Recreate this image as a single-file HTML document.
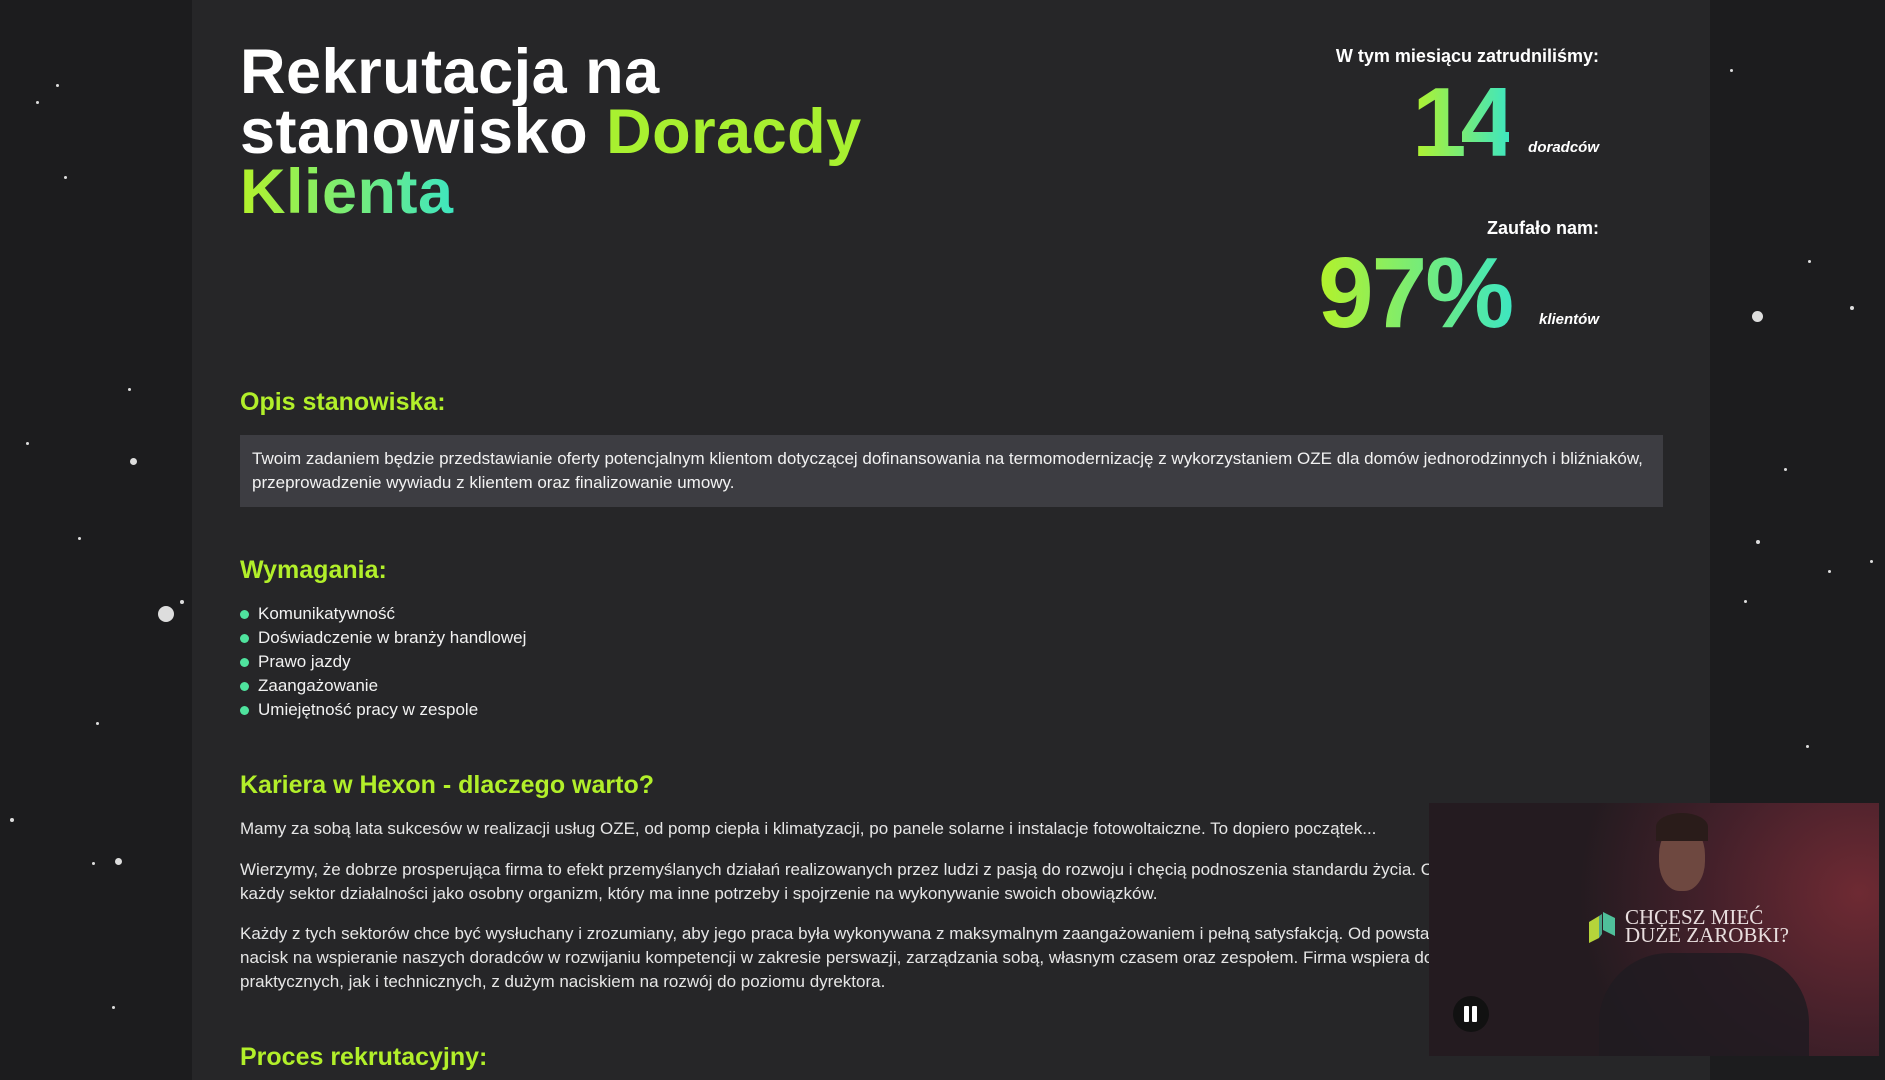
<!DOCTYPE html>
<html><head><meta charset="utf-8"><style>
*{margin:0;padding:0;box-sizing:border-box}
html,body{width:1885px;height:1080px;overflow:hidden;background:#1c1c1e;font-family:"Liberation Sans",sans-serif;color:#fff}
.panel{position:absolute;left:192px;top:0;width:1518px;height:1080px;background:#262628}
.abs{position:absolute;white-space:nowrap}
.grad{background:linear-gradient(90deg,#b4f22a,#3ee6c0);-webkit-background-clip:text;background-clip:text;color:transparent}
h1{position:absolute;left:240px;top:42px;font-size:63px;line-height:60px;font-weight:bold;letter-spacing:0.5px}
.h2{position:absolute;left:240px;font-size:25px;font-weight:bold;color:#b2ef2a}
.p{position:absolute;left:240px;font-size:17px;color:#e6e6e6;white-space:nowrap}
.star{position:absolute;background:#ddd;border-radius:50%}
</style></head><body>
<div class="panel"></div>
<h1>Rekrutacja na<br>stanowisko <span style="color:#a8f030">Doracdy</span><br><span class="grad">Klienta</span></h1>

<div class="abs" style="right:286px;top:46px;font-size:18px;font-weight:bold">W tym miesiącu zatrudniliśmy:</div>
<div class="abs grad" style="left:1412px;top:66px;font-size:98px;font-weight:bold;letter-spacing:-6px">14</div>
<div class="abs" style="right:286px;top:139px;font-size:15px;font-weight:bold;font-style:italic">doradców</div>
<div class="abs" style="right:286px;top:218px;font-size:18px;font-weight:bold">Zaufało nam:</div>
<div class="abs grad" style="left:1318px;top:236px;font-size:100px;font-weight:bold;letter-spacing:-2px">97%</div>
<div class="abs" style="right:286px;top:311px;font-size:15px;font-weight:bold;font-style:italic">klientów</div>

<div class="h2" style="top:388px">Opis stanowiska:</div>
<div style="position:absolute;left:240px;top:435px;width:1423px;height:72px;background:#3d3d42;padding:12px 0 0 12px;font-size:17px;line-height:24px;color:#f2f2f2;white-space:nowrap">Twoim zadaniem będzie przedstawianie oferty potencjalnym klientom dotyczącej dofinansowania na termomodernizację z wykorzystaniem OZE dla domów jednorodzinnych i bliźniaków,<br>przeprowadzenie wywiadu z klientem oraz finalizowanie umowy.</div>

<div class="h2" style="top:556px">Wymagania:</div>
<div style="position:absolute;left:240px;top:602px;font-size:17px;line-height:24px;color:#f2f2f2">
<div><span style="display:inline-block;width:9px;height:9px;border-radius:50%;background:#4fe39e;margin-right:9px"></span>Komunikatywność</div>
<div><span style="display:inline-block;width:9px;height:9px;border-radius:50%;background:#4fe39e;margin-right:9px"></span>Doświadczenie w branży handlowej</div>
<div><span style="display:inline-block;width:9px;height:9px;border-radius:50%;background:#4fe39e;margin-right:9px"></span>Prawo jazdy</div>
<div><span style="display:inline-block;width:9px;height:9px;border-radius:50%;background:#4fe39e;margin-right:9px"></span>Zaangażowanie</div>
<div><span style="display:inline-block;width:9px;height:9px;border-radius:50%;background:#4fe39e;margin-right:9px"></span>Umiejętność pracy w zespole</div>
</div>

<div class="h2" style="top:771px">Kariera w Hexon - dlaczego warto?</div>
<div class="p" style="top:819px">Mamy za sobą lata sukcesów w realizacji usług OZE, od pomp ciepła i klimatyzacji, po panele solarne i instalacje fotowoltaiczne. To dopiero początek...</div>
<div class="p" style="top:858px;line-height:24px">Wierzymy, że dobrze prosperująca firma to efekt przemyślanych działań realizowanych przez ludzi z pasją do rozwoju i chęcią podnoszenia standardu życia. Od samego<br>każdy sektor działalności jako osobny organizm, który ma inne potrzeby i spojrzenie na wykonywanie swoich obowiązków.</div>
<div class="p" style="top:922px;line-height:24px">Każdy z tych sektorów chce być wysłuchany i zrozumiany, aby jego praca była wykonywana z maksymalnym zaangażowaniem i pełną satysfakcją. Od powstania firmy<br>nacisk na wspieranie naszych doradców w rozwijaniu kompetencji w zakresie perswazji, zarządzania sobą, własnym czasem oraz zespołem. Firma wspiera doradców<br>praktycznych, jak i technicznych, z dużym naciskiem na rozwój do poziomu dyrektora.</div>
<div class="h2" style="top:1043px">Proces rekrutacyjny:</div>

<div style="position:absolute;left:1429px;top:803px;width:450px;height:253px;overflow:hidden;background:radial-gradient(ellipse 280px 260px at 430px 90px,#6e2a33,#43202a 55%,#241b20);">
<div style="position:absolute;left:170px;top:150px;width:210px;height:140px;background:#201b21;border-radius:70px 70px 0 0;opacity:.85"></div>
<div style="position:absolute;left:230px;top:22px;width:46px;height:66px;border-radius:45%;background:#6e4840"></div>
<div style="position:absolute;left:227px;top:10px;width:52px;height:28px;border-radius:50% 50% 0 0;background:#2a1c1a"></div>
<svg style="position:absolute;left:157px;top:107px" width="32" height="34" viewBox="0 0 32 34"><path d="M3 12 L13 6 L13 28 L3 33Z" fill="#b5d43a"/><path d="M13 6 L16 4 L16 24 L13 28Z" fill="#4aa58a"/><path d="M17 2 L29 8 L29 26 L17 20Z" fill="#4fbf9a"/></svg>
<div style="position:absolute;left:196px;top:105px;font-family:'Liberation Serif',serif;font-size:21px;line-height:18px;color:#e8dede">CHCESZ MIEĆ<br>DUŻE ZAROBKI?</div>
<div style="position:absolute;left:24px;top:193px;width:36px;height:36px;border-radius:50%;background:#111"><div style="position:absolute;left:11px;top:10px;width:5px;height:16px;background:#fff;border-radius:1px"></div><div style="position:absolute;left:19px;top:10px;width:5px;height:16px;background:#fff;border-radius:1px"></div></div>
</div>

<div class="star" style="left:158px;top:606px;width:16px;height:16px"></div>
<div class="star" style="left:130px;top:458px;width:7px;height:7px"></div>
<div class="star" style="left:115px;top:858px;width:7px;height:7px"></div>
<div class="star" style="left:1752px;top:311px;width:11px;height:11px"></div>
<div class="star" style="left:180px;top:600px;width:4px;height:4px"></div>
<div class="star" style="left:36px;top:101px;width:3px;height:3px"></div>
<div class="star" style="left:56px;top:84px;width:3px;height:3px"></div>
<div class="star" style="left:64px;top:176px;width:3px;height:3px"></div>
<div class="star" style="left:128px;top:388px;width:3px;height:3px"></div>
<div class="star" style="left:26px;top:442px;width:3px;height:3px"></div>
<div class="star" style="left:78px;top:537px;width:3px;height:3px"></div>
<div class="star" style="left:96px;top:722px;width:3px;height:3px"></div>
<div class="star" style="left:10px;top:818px;width:4px;height:4px"></div>
<div class="star" style="left:92px;top:862px;width:3px;height:3px"></div>
<div class="star" style="left:112px;top:1006px;width:3px;height:3px"></div>
<div class="star" style="left:1730px;top:69px;width:3px;height:3px"></div>
<div class="star" style="left:1808px;top:260px;width:3px;height:3px"></div>
<div class="star" style="left:1850px;top:306px;width:4px;height:4px"></div>
<div class="star" style="left:1756px;top:540px;width:4px;height:4px"></div>
<div class="star" style="left:1828px;top:570px;width:3px;height:3px"></div>
<div class="star" style="left:1784px;top:468px;width:3px;height:3px"></div>
<div class="star" style="left:1744px;top:600px;width:3px;height:3px"></div>
<div class="star" style="left:1806px;top:745px;width:3px;height:3px"></div>
<div class="star" style="left:1870px;top:560px;width:3px;height:3px"></div>
</body></html>
